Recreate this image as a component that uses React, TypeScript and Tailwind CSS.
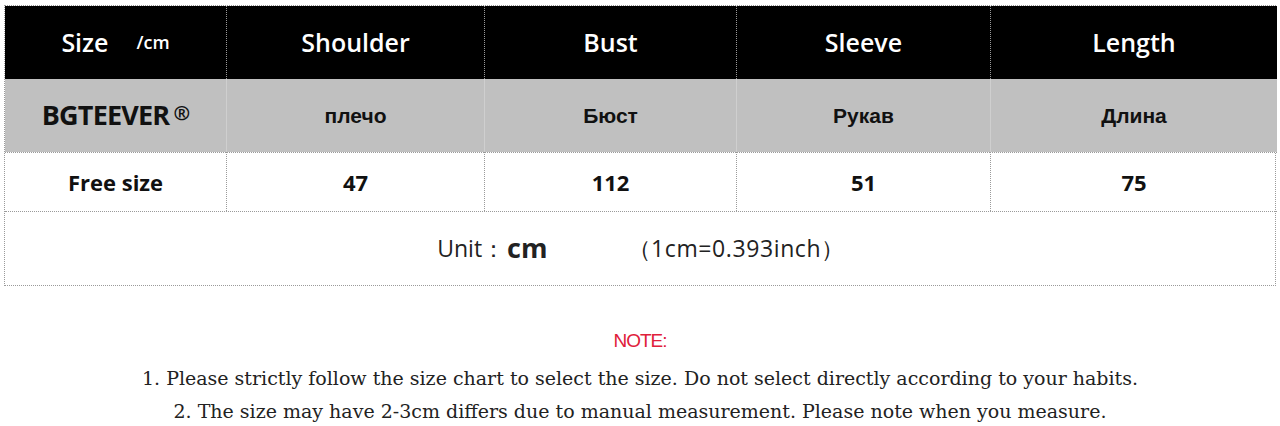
const cols = ["Shoulder", "Bust", "Sleeve", "Length"];
const ru = ["плечо", "Бюст", "Рукав", "Длина"];
const vals = ["47", "112", "51", "75"];

const sans = "font-['Open_Sans','Liberation_Sans',sans-serif]";

export default function App() {
  return (
    <div className="w-[1280px] h-[426px] bg-white overflow-hidden">
      <div className="pt-[5px] pl-[4px]">
        <div className="grid w-[1272px] grid-cols-[221px_258px_252px_254px_287px] border border-dotted border-[#9a9a9a]">
          {/* header row */}
          <div className={`h-[73px] bg-black flex items-center justify-center gap-[28px] text-white ${sans}`}>
            <span className="text-[25px] font-semibold">Size</span>
            <span className="text-[18px] font-semibold">/cm</span>
          </div>
          {cols.map((c) => (
            <div
              key={c}
              className={`h-[73px] bg-black border-l border-dotted border-[#9a9a9a] flex items-center justify-center text-white text-[25px] font-semibold ${sans}`}
            >
              {c}
            </div>
          ))}

          {/* russian row */}
          <div className="h-[73px] bg-[#c0c0c0] flex items-center justify-center text-[#111] font-['Open_Sans',sans-serif] text-[27px] font-bold tracking-[-0.8px]">
            BGTEEVER
            <span className="ml-[4px] text-[20px] -mt-[6px]">®</span>
          </div>
          {ru.map((r) => (
            <div
              key={r}
              className="h-[73px] bg-[#c0c0c0] border-l border-[#cfcfcf] flex items-center justify-center text-[#111] font-['Liberation_Sans_Narrow','Liberation_Sans',sans-serif] text-[21px] font-bold"
            >
              {r}
            </div>
          ))}

          {/* values row */}
          <div className={`h-[59px] border-t border-dotted border-[#9a9a9a] flex items-center justify-center text-[#111] text-[22px] font-bold ${sans}`}>
            Free size
          </div>
          {vals.map((v) => (
            <div
              key={v}
              className={`h-[59px] border-t border-l border-dotted border-[#9a9a9a] flex items-center justify-center text-[#111] text-[22px] font-bold ${sans}`}
            >
              {v}
            </div>
          ))}

          {/* unit row */}
          <div className={`col-span-5 h-[74px] border-t border-dotted border-[#9a9a9a] flex items-center justify-center text-[#222] ${sans}`}>
            <span className="text-[23px]">Unit：</span>
            <span className="text-[27px] font-bold ml-[2px]">cm</span>
            <span className="text-[23px] ml-[80px] tracking-[0.6px]">（1cm=0.393inch）</span>
          </div>
        </div>
      </div>

      <div className="mt-[41px] flex flex-col items-center">
        <div className="text-[19px] text-[#e0203a] font-['Liberation_Sans',sans-serif] tracking-[-1px]">NOTE:</div>
        <div className="mt-[10px] text-[19px] leading-[24px] text-[#222] font-['DejaVu_Serif',serif]">
          1. Please strictly follow the size chart to select the size. Do not select directly according to your habits.
        </div>
        <div className="mt-[9px] text-[19px] leading-[24px] text-[#222] font-['DejaVu_Serif',serif]">
          2. The size may have 2-3cm differs due to manual measurement. Please note when you measure.
        </div>
      </div>
    </div>
  );
}
